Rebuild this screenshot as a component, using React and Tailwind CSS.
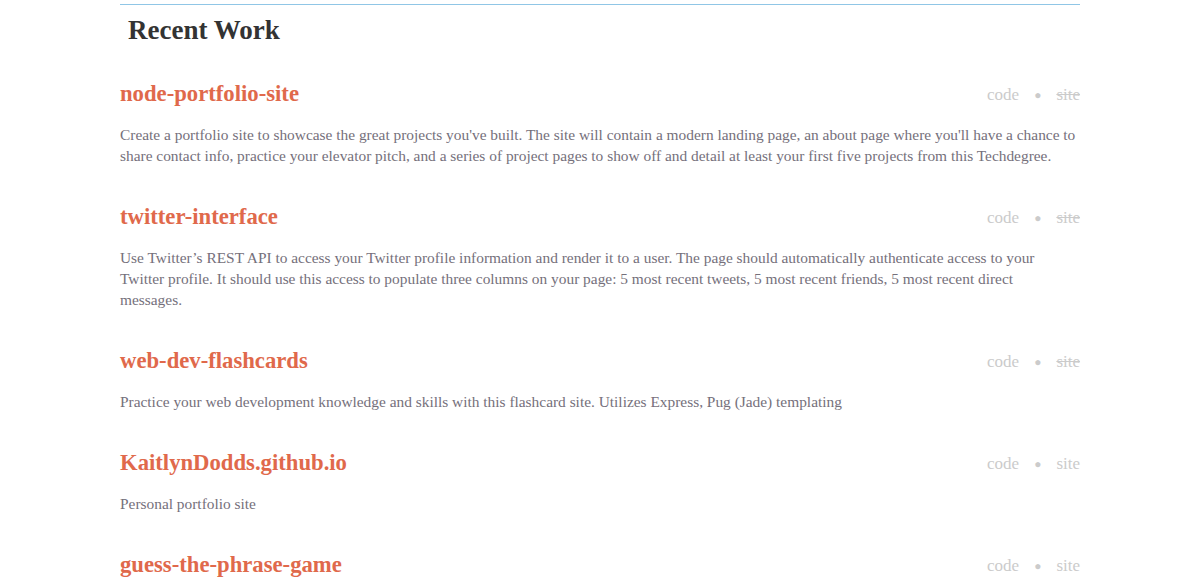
const projects = [
  {
    name: "node-portfolio-site",
    desc: "Create a portfolio site to showcase the great projects you've built. The site will contain a modern landing page, an about page where you'll have a chance to share contact info, practice your elevator pitch, and a series of project pages to show off and detail at least your first five projects from this Techdegree.",
    noSite: true,
  },
  {
    name: "twitter-interface",
    desc: "Use Twitter’s REST API to access your Twitter profile information and render it to a user. The page should automatically authenticate access to your Twitter profile. It should use this access to populate three columns on your page: 5 most recent tweets, 5 most recent friends, 5 most recent direct messages.",
    noSite: true,
  },
  {
    name: "web-dev-flashcards",
    desc: "Practice your web development knowledge and skills with this flashcard site. Utilizes Express, Pug (Jade) templating",
    noSite: true,
  },
  {
    name: "KaitlynDodds.github.io",
    desc: "Personal portfolio site",
    noSite: false,
  },
  {
    name: "guess-the-phrase-game",
    desc: "",
    noSite: false,
  },
];

function Project({ project }) {
  return (
    <div className="mb-[36px]">
      <div className="flex items-center justify-between">
        <h3 className="text-[22.7px] leading-[30px] font-bold text-[#e0694b]">{project.name}</h3>
        <div className="flex items-center gap-[15px] text-[17px] text-[#cbcbcb] pt-[2px]">
          <span>code</span>
          <span className="text-[12px]">●</span>
          <span className={project.noSite ? "line-through" : ""}>site</span>
        </div>
      </div>
      {project.desc && (
        <p className="mt-[15px] max-w-[957px] text-[15.4px] leading-[21px] text-[#75707b]">{project.desc}</p>
      )}
    </div>
  );
}

export default function App() {
  return (
    <div className="min-h-[580px] bg-white" style={{ fontFamily: '"Liberation Serif", "DejaVu Serif", serif' }}>
      <div className="mx-auto w-[960px] pt-[4px]">
        <div className="border-t border-[#90c6e6]">
          <h2 className="pl-[8px] pt-[7px] text-[27px] leading-[36px] font-bold text-[#333333]">
            Recent Work
          </h2>
          <div className="mt-[31px]">
            {projects.map((p) => (
              <Project key={p.name} project={p} />
            ))}
          </div>
        </div>
      </div>
    </div>
  );
}
